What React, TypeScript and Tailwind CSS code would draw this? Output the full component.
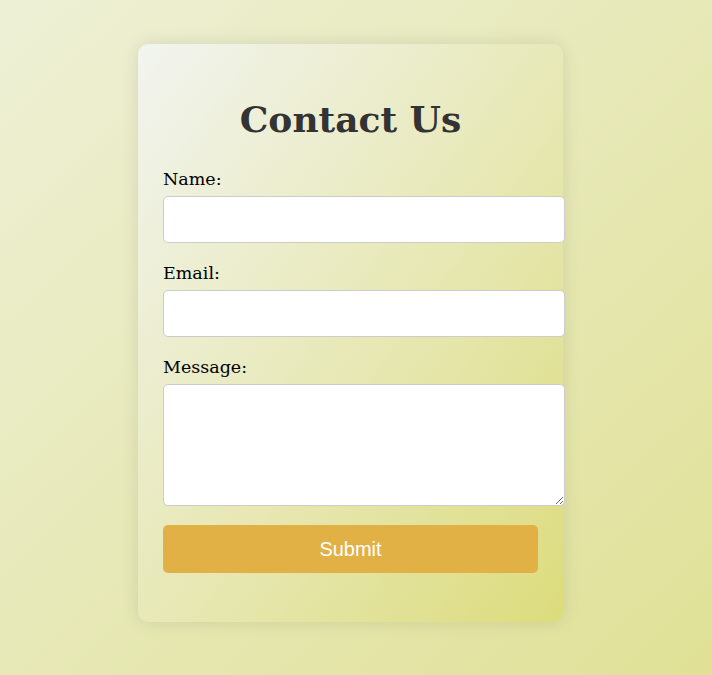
export default function App() {
  return (
    <div className="min-h-[675px] w-full bg-linear-to-br from-[#eef0d6] to-[#e0e196] pt-[44px] pr-[11px] flex justify-center items-start font-['DejaVu_Serif',serif]">
      <div className="w-[425px] rounded-[10px] bg-linear-to-br from-[#f2f4f0] via-[#e8e9b8] to-[#dcdc7c] shadow-[0_0_18px_rgba(0,0,0,0.1)] px-[25px] pt-[25px] pb-[49px]">
        <h1 className="text-center font-bold text-[#333333] text-[36px] leading-[46px] mt-[27px] mb-[26px]">
          Contact Us
        </h1>

        <form className="flex flex-col">
          <label htmlFor="name" className="block text-[17.5px] leading-[22px] text-black mb-[6px]">
            Name:
          </label>
          <input
            type="text"
            id="name"
            name="name"
            className="w-[402px] h-[47px] mb-[19px] bg-white border border-[#cccccc] rounded-[5px] px-3 outline-none"
          />

          <label htmlFor="email" className="block text-[17.5px] leading-[22px] text-black mb-[6px]">
            Email:
          </label>
          <input
            type="email"
            id="email"
            name="email"
            className="w-[402px] h-[47px] mb-[19px] bg-white border border-[#cccccc] rounded-[5px] px-3 outline-none"
          />

          <label htmlFor="message" className="block text-[17.5px] leading-[22px] text-black mb-[6px]">
            Message:
          </label>
          <textarea
            id="message"
            name="message"
            className="w-[402px] h-[122px] mb-[19px] bg-white border border-[#cccccc] rounded-[5px] px-3 py-2 outline-none block"
          />

          <button
            type="submit"
            className="w-[375px] h-[48px] rounded-[5px] bg-[#e2b146] text-white text-[20px] font-['Liberation_Sans',sans-serif]"
          >
            Submit
          </button>
        </form>
      </div>
    </div>
  )
}
